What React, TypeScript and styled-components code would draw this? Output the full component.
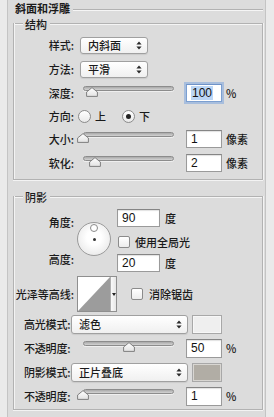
import React from 'react';
import styled, { createGlobalStyle } from 'styled-components';

const GlobalStyle = createGlobalStyle`
  *, *::before, *::after { box-sizing: border-box; }
  html, body { margin: 0; padding: 0; }
  body {
    background: #e9e9e9;
    font-family: "Noto Sans CJK SC", "Liberation Sans", sans-serif;
    font-size: 11px;
    font-weight: 500;
    color: #1a1a1a;
  }
`;

const Window = styled.div`
  display: flex;
  width: 274px;
  height: 417px;
  overflow: hidden;
  background: #eaeaea;
`;

const Panel = styled.div`
  display: flex;
  flex-direction: column;
  width: 259px;
  margin-left: 7px;
  padding: 0 2px 0 5px;
  border-left: 1px solid #c4c4c4;
  border-right: 1px solid #c4c4c4;
  background: #dcdcdc;
`;

const HeadLine = styled.div<{ $w?: number }>`
  flex: ${({ $w }) => ($w ? 'none' : '1')};
  width: ${({ $w }) => ($w ? `${$w}px` : 'auto')};
  height: 2px;
  align-self: center;
  border-top: 1px solid #b2b2b2;
  border-bottom: 1px solid #f5f5f5;
`;

const PanelHead = styled.div`
  display: flex;
  align-items: flex-start;
  height: 20px;
`;

const PanelTitle = styled.span`
  margin: 1px 3px 0 2px;
  font-weight: 700;
  line-height: 14px;
`;

const Group = styled.section<{ $mt: number }>`
  display: flex;
  flex-direction: column;
  margin-top: ${({ $mt }) => $mt}px;
`;

const GroupHead = styled.div`
  display: flex;
  align-items: center;
  height: 14px;
`;

const GroupTitle = styled.span`
  margin: 0 3px 0 2px;
  line-height: 12px;
`;

const GroupBody = styled.div<{ $pt: number; $pb: number }>`
  display: flex;
  flex-direction: column;
  margin-top: -8px;
  padding: ${({ $pt }) => $pt}px 0 ${({ $pb }) => $pb}px;
  border: 1px solid #b2b2b2;
  border-top: none;
  box-shadow: inset 1px 0 0 #f3f3f3, 0 1px 0 #f3f3f3, 1px 0 0 #f3f3f3;
`;

const Row = styled.div<{ $h?: number; $mt?: number }>`
  display: flex;
  align-items: center;
  height: ${({ $h }) => $h ?? 24}px;
  margin-top: ${({ $mt }) => $mt ?? 0}px;
`;

const Label = styled.span`
  flex: none;
  width: 60px;
  text-align: right;
  line-height: 14px;
  white-space: nowrap;
`;

const ModeLabel = styled(Label)`
  width: 57px;
  padding-left: 10px;
  text-align: left;
  letter-spacing: -0.2px;
`;

const Unit = styled.span<{ $ml?: number }>`
  margin-left: ${({ $ml }) => $ml ?? 4}px;
  line-height: 14px;
  white-space: nowrap;
`;

const SelectBox = styled.div<{ $w: number; $h: number; $ml: number }>`
  display: flex;
  align-items: center;
  justify-content: space-between;
  width: ${({ $w }) => $w}px;
  height: ${({ $h }) => $h}px;
  margin-left: ${({ $ml }) => $ml}px;
  padding: 0 5px 0 7px;
  border: 1px solid #a0a0a0;
  border-radius: 3px;
  background: linear-gradient(#ffffff, #f0f0f0);
  box-shadow: 0 1px 1px rgba(0, 0, 0, 0.08);
  line-height: 14px;
`;

const Field = styled.div<{ $w: number; $h?: number; $ml: number; $focus?: boolean }>`
  display: flex;
  align-items: center;
  width: ${({ $w }) => $w}px;
  height: ${({ $h }) => $h ?? 18}px;
  margin-left: ${({ $ml }) => $ml}px;
  padding-left: 4px;
  border: 1px solid ${({ $focus }) => ($focus ? '#7c9fd0' : '#9a9a9a')};
  border-top-color: ${({ $focus }) => ($focus ? '#6f93c8' : '#858585')};
  background: #fff;
  box-shadow: ${({ $focus }) =>
    $focus ? '0 0 0 2px rgba(125, 165, 222, 0.55)' : 'inset 0 1px 1px rgba(0,0,0,0.12)'};
  font-family: "Liberation Sans", Arial, sans-serif;
  font-size: 12px;
  font-weight: 400;
  color: #111;
`;

const Selected = styled.span`
  background: #bcd6f5;
  padding: 0 1px;
`;

const SliderBox = styled.div<{ $ml: number }>`
  position: relative;
  flex: none;
  width: 91px;
  height: 12px;
  margin-left: ${({ $ml }) => $ml}px;
  align-self: center;
  transform: translateY(-1px);
`;

const Track = styled.div`
  height: 5px;
  border: 1px solid #8c8c8c;
  border-radius: 3px;
  background: linear-gradient(#a9a9a9, #d3d3d3);
  box-shadow: 0 1px 0 #efefef;
`;

const Thumb = styled.svg`
  position: absolute;
  top: 1px;
`;

const Radio = styled.span<{ $on?: boolean }>`
  display: inline-flex;
  align-items: center;
  justify-content: center;
  width: 13px;
  height: 13px;
  margin-left: ${({ $on }) => ($on ? 16 : 4)}px;
  border: 1px solid #8b8b8b;
  border-radius: 50%;
  background: linear-gradient(#ffffff, #e9e9e9);
  &::after {
    content: '';
    display: ${({ $on }) => ($on ? 'block' : 'none')};
    width: 5px;
    height: 5px;
    border-radius: 50%;
    background: #222;
  }
`;

const Box = styled.span<{ $ml: number }>`
  flex: none;
  width: 12px;
  height: 12px;
  margin-left: ${({ $ml }) => $ml}px;
  border: 1px solid #8b8b8b;
  border-radius: 2px;
  background: linear-gradient(#ffffff, #ececec);
`;

const AngleBlock = styled.div`
  display: flex;
  height: 61px;
`;

const AngleLabels = styled.div`
  display: flex;
  flex-direction: column;
  gap: 23px;
  width: 60px;
  padding-top: 6px;
  text-align: right;
  line-height: 14px;
`;

const Dial = styled.div`
  position: relative;
  width: 34px;
  height: 34px;
  margin: 13px 0 0 3px;
  border: 1px solid #9a9a9a;
  border-radius: 50%;
  background: radial-gradient(circle at 50% 45%, #ffffff 30%, #e0e0e0 100%);
  &::before {
    content: '';
    position: absolute;
    left: 12px;
    top: 1px;
    width: 8px;
    height: 8px;
    border: 1px solid #8a8a8a;
    border-radius: 50%;
    background: #fff;
  }
  &::after {
    content: '';
    position: absolute;
    left: 14.5px;
    top: 14.5px;
    width: 3px;
    height: 3px;
    border-radius: 50%;
    background: #333;
  }
`;

const AngleControls = styled.div`
  display: flex;
  flex-direction: column;
  margin-left: 6px;
`;

const ControlLine = styled.div<{ $mt: number }>`
  display: flex;
  align-items: center;
  margin-top: ${({ $mt }) => $mt}px;
`;

const Contour = styled.div`
  display: flex;
  width: 40px;
  height: 36px;
  margin-left: 3px;
  border: 1px solid #8f8f8f;
  background: #fff;
`;

const ContourDrop = styled.div`
  display: flex;
  align-items: center;
  justify-content: center;
  flex: 1;
  border-left: 1px solid #b0b0b0;
  background: linear-gradient(90deg, #fafafa, #e6e6e6);
`;

const Swatch = styled.div<{ $c: string }>`
  width: 30px;
  height: 19px;
  margin-left: 4px;
  border: 1px solid #a8a8a8;
  background: ${({ $c }) => $c};
  box-shadow: inset 0 0 0 1px rgba(255, 255, 255, 0.5);
`;

const UpDown = () => (
  <svg width="6" height="9" viewBox="0 0 6 9">
    <path d="M3 0.5 L5.6 3.6 H0.4 Z M3 8.5 L5.6 5.4 H0.4 Z" fill="#2a2a2a" />
  </svg>
);

function Slider({ at, ml }: { at: number; ml: number }) {
  return (
    <SliderBox $ml={ml}>
      <Track />
      <Thumb width="12" height="10" viewBox="0 0 12 10" style={{ left: at - 6 }}>
        <defs>
          <linearGradient id="tg" x1="0" y1="0" x2="0" y2="1">
            <stop offset="0" stopColor="#ffffff" />
            <stop offset="1" stopColor="#e2e2e2" />
          </linearGradient>
        </defs>
        <path d="M6 0.6 L11.4 5 V9.4 H0.6 V5 Z" fill="url(#tg)" stroke="#7f7f7f" strokeWidth="1" />
      </Thumb>
    </SliderBox>
  );
}

export default function App() {
  return (
    <Window>
      <GlobalStyle />
      <Panel>
        <PanelHead>
          <PanelTitle>斜面和浮雕</PanelTitle>
          <HeadLine />
        </PanelHead>

        <Group $mt={-3}>
          <GroupHead>
            <HeadLine $w={10} />
            <GroupTitle>结构</GroupTitle>
            <HeadLine />
          </GroupHead>
          <GroupBody $pt={10} $pb={4}>
            <Row>
              <Label>样式:</Label>
              <SelectBox $w={68} $h={17} $ml={6}>
                内斜面
                <UpDown />
              </SelectBox>
            </Row>
            <Row>
              <Label>方法:</Label>
              <SelectBox $w={68} $h={17} $ml={6}>
                平滑
                <UpDown />
              </SelectBox>
            </Row>
            <Row>
              <Label>深度:</Label>
              <Slider at={9} ml={9} />
              <Field $w={36} $ml={12} $focus>
                <Selected>100</Selected>
              </Field>
              <Unit>%</Unit>
            </Row>
            <Row $h={22}>
              <Label>方向:</Label>
              <Radio />
              <Unit>上</Unit>
              <Radio $on />
              <Unit>下</Unit>
            </Row>
            <Row>
              <Label>大小:</Label>
              <Slider at={0} ml={9} />
              <Field $w={36} $ml={12}>1</Field>
              <Unit>像素</Unit>
            </Row>
            <Row>
              <Label>软化:</Label>
              <Slider at={12} ml={9} />
              <Field $w={36} $ml={12}>2</Field>
              <Unit>像素</Unit>
            </Row>
          </GroupBody>
        </Group>

        <Group $mt={10}>
          <GroupHead>
            <HeadLine $w={10} />
            <GroupTitle>阴影</GroupTitle>
            <HeadLine />
          </GroupHead>
          <GroupBody $pt={13} $pb={1}>
            <AngleBlock>
              <AngleLabels>
                <span>角度:</span>
                <span>高度:</span>
              </AngleLabels>
              <Dial />
              <AngleControls>
                <ControlLine $mt={0}>
                  <Field $w={43} $ml={0}>90</Field>
                  <Unit $ml={5}>度</Unit>
                </ControlLine>
                <ControlLine $mt={8}>
                  <Box $ml={1} />
                  <Unit $ml={5}>使用全局光</Unit>
                </ControlLine>
                <ControlLine $mt={5}>
                  <Field $w={43} $ml={0}>20</Field>
                  <Unit $ml={5}>度</Unit>
                </ControlLine>
              </AngleControls>
            </AngleBlock>
            <Row $h={36} $mt={6}>
              <Label>光泽等高线:</Label>
              <Contour>
                <svg width="32" height="34" viewBox="0 0 32 34">
                  <polygon points="0,34 32,0 32,34" fill="#9c9c9c" />
                </svg>
                <ContourDrop>
                  <svg width="4" height="3" viewBox="0 0 4 3">
                    <path d="M0 0 H4 L2 3 Z" fill="#222" />
                  </svg>
                </ContourDrop>
              </Contour>
              <Box $ml={14} />
              <Unit $ml={6}>消除锯齿</Unit>
            </Row>
            <Row>
              <ModeLabel>高光模式:</ModeLabel>
              <SelectBox $w={117} $h={19} $ml={0}>
                滤色
                <UpDown />
              </SelectBox>
              <Swatch $c="#efefef" />
            </Row>
            <Row>
              <ModeLabel>不透明度:</ModeLabel>
              <Slider at={46} ml={12} />
              <Field $w={36} $h={19} $ml={12}>50</Field>
              <Unit>%</Unit>
            </Row>
            <Row>
              <ModeLabel>阴影模式:</ModeLabel>
              <SelectBox $w={117} $h={19} $ml={0}>
                正片叠底
                <UpDown />
              </SelectBox>
              <Swatch $c="#b1ada5" />
            </Row>
            <Row>
              <ModeLabel>不透明度:</ModeLabel>
              <Slider at={0} ml={12} />
              <Field $w={36} $h={19} $ml={12}>1</Field>
              <Unit>%</Unit>
            </Row>
          </GroupBody>
        </Group>
      </Panel>
    </Window>
  );
}
